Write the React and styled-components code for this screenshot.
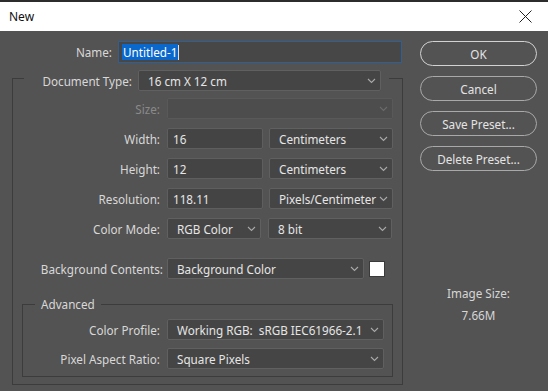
import React from "react";
import styled, { createGlobalStyle } from "styled-components";

const Global = createGlobalStyle`
  html, body { margin: 0; padding: 0; background: #535353; }
  body { width: 548px; height: 391px; overflow: hidden; font-family: "Noto Sans", "Open Sans", sans-serif; }
  * { box-sizing: border-box; }
`;

const Window = styled.div`
  width: 548px;
  height: 391px;
  display: flex;
  flex-direction: column;
  background: #535353;
  font-size: 11.7px;
  color: #dcdcdc;
`;

const TitleBar = styled.div`
  height: 31px;
  flex: none;
  border-top: 2px solid #2c2c2c;
  background: #ffffff;
  display: flex;
  align-items: center;
  justify-content: space-between;
  padding: 0 16px 0 9px;
  color: #111;
  font-size: 12px;
`;

const Body = styled.div`
  display: flex;
  padding: 10px 11px 0 12px;
  gap: 17px;
`;

const Main = styled.div`
  width: 391px;
  display: flex;
  flex-direction: column;
`;

const Row = styled.div`
  display: flex;
  align-items: center;
  gap: ${(p) => p.$gap ?? 7}px;
  margin-top: ${(p) => p.$mt ?? 0}px;
  margin-left: ${(p) => p.$ml ?? 0}px;
`;

const Label = styled.span`
  width: ${(p) => p.$w}px;
  flex: none;
  text-align: right;
  white-space: nowrap;
  line-height: ${(p) => p.$lh ?? 16}px;
  color: ${(p) => (p.$disabled ? "#8a8a8a" : "#d8d8d8")};
`;

const NameInput = styled.div`
  width: 284px;
  height: 22px;
  border: 1px solid #2f5f93;
  background: #474747;
  display: flex;
  align-items: center;
  padding-left: 3px;
`;

const Selected = styled.span`
  background: #0a68cc;
  color: #fff;
  padding: 0 1px;
  line-height: 16px;
`;

const Caret = styled.span`
  width: 1px;
  height: 15px;
  background: #e0e0e0;
`;

const Field = styled.div`
  width: ${(p) => p.$w}px;
  height: 21px;
  flex: none;
  background: #444444;
  border: 1px solid #5e5e5e;
  border-radius: 2px;
  display: flex;
  align-items: center;
  padding-left: 5px;
  color: #e6e6e6;
  white-space: pre;
`;

const SelectBox = styled.div`
  width: ${(p) => p.$w}px;
  height: 21px;
  flex: none;
  background: ${(p) => (p.$disabled ? "#4d4d4d" : "#454545")};
  border: 1px solid ${(p) => (p.$disabled ? "#595959" : "#606060")};
  border-radius: 2px;
  display: flex;
  align-items: center;
  justify-content: space-between;
  gap: 2px;
  padding: 0 4px 0 9px;
  color: #e6e6e6;
  white-space: pre;
  overflow: hidden;
`;

const Chevron = ({ dim }) => (
  <svg width="9" height="6" viewBox="0 0 9 6" style={{ flex: "none" }}>
    <path d="M1 1 L4.5 4.5 L8 1" fill="none" stroke={dim ? "#6a6a6a" : "#a8a8a8"} strokeWidth="1.1" />
  </svg>
);

const Select = ({ w, children, disabled }) => (
  <SelectBox $w={w} $disabled={disabled}>
    <span>{children}</span>
    <Chevron dim={disabled} />
  </SelectBox>
);

const Group = styled.fieldset`
  margin: 7px 0 0 0;
  padding: 12px 9px 7px 0;
  border: 1px solid #3c3c3c;
  display: flex;
  flex-direction: column;
  gap: 9px;
  min-width: 0;
`;

const TopLegend = styled.legend`
  margin-left: 11px;
  padding: 0 8px 0 16px;
  height: 16px;
  display: flex;
  align-items: flex-start;
  gap: 6px;
`;

const SubGroup = styled.fieldset`
  margin: 8px 0 0 9px;
  padding: 7px 9px 7px 0;
  border: 1px solid #3c3c3c;
  display: flex;
  flex-direction: column;
  gap: 8px;
  min-width: 0;
`;

const SubLegend = styled.legend`
  margin-left: 12px;
  padding: 0 6px;
  line-height: 16px;
  height: 16px;
  color: #d8d8d8;
`;

const Swatch = styled.div`
  width: 16px;
  height: 16px;
  background: #ffffff;
  border: 1px solid #3a3a3a;
  margin-left: -2px;
`;

const Side = styled.div`
  width: 117px;
  display: flex;
  flex-direction: column;
  gap: 10px;
`;

const Button = styled.div`
  height: 25px;
  border-radius: 13px;
  border: ${(p) => (p.$primary ? "1.5px solid #d2d2d2" : "1px solid #a9a9a9")};
  display: flex;
  align-items: center;
  justify-content: center;
  color: #e4e4e4;
`;

const ImageSize = styled.div`
  margin-top: 104px;
  display: flex;
  flex-direction: column;
  align-items: center;
  gap: 6px;
  color: #d6d6d6;
  line-height: 16px;
`;

const CloseIcon = () => (
  <svg width="13" height="13" viewBox="0 0 13 13">
    <path d="M0.5 0.5 L12.5 12.5 M12.5 0.5 L0.5 12.5" stroke="#222" strokeWidth="1" />
  </svg>
);

export default function App() {
  return (
    <>
      <Global />
      <Window>
        <TitleBar>
          <span>New</span>
          <CloseIcon />
        </TitleBar>
        <Body>
          <Main>
            <Row $gap={6}>
              <Label $w={100}>Name:</Label>
              <NameInput>
                <Selected>Untitled-1</Selected>
                <Caret />
              </NameInput>
            </Row>
            <Group>
              <TopLegend>
                <Label $w={92} $lh={22}>Document Type:</Label>
                <Select w={243}>16 cm X 12 cm</Select>
              </TopLegend>
              <Row>
                <Label $w={147} $disabled>Size:</Label>
                <Select w={226} disabled>{" "}</Select>
              </Row>
              <Row>
                <Label $w={147}>Width:</Label>
                <Field $w={96}>16</Field>
                <Row $gap={0} $ml={-1}>
                  <Select w={124}>Centimeters</Select>
                </Row>
              </Row>
              <Row>
                <Label $w={147}>Height:</Label>
                <Field $w={96}>12</Field>
                <Row $gap={0} $ml={-1}>
                  <Select w={124}>Centimeters</Select>
                </Row>
              </Row>
              <Row>
                <Label $w={147}>Resolution:</Label>
                <Field $w={96}>118.11</Field>
                <Row $gap={0} $ml={-1}>
                  <Select w={124}>Pixels/Centimeter</Select>
                </Row>
              </Row>
              <Row>
                <Label $w={147}>Color Mode:</Label>
                <Select w={94}>RGB Color</Select>
                <Select w={124}>8 bit</Select>
              </Row>
              <Row $mt={10}>
                <Label $w={150}>Background Contents:</Label>
                <Row $gap={7} $ml={-3}>
                  <Select w={197}>Background Color</Select>
                  <Swatch />
                </Row>
              </Row>
              <SubGroup>
                <SubLegend>Advanced</SubLegend>
                <Row>
                  <Label $w={137}>Color Profile:</Label>
                  <Select w={217}>{"Working RGB:  sRGB IEC61966-2.1"}</Select>
                </Row>
                <Row>
                  <Label $w={137}>Pixel Aspect Ratio:</Label>
                  <Select w={217}>Square Pixels</Select>
                </Row>
              </SubGroup>
            </Group>
          </Main>
          <Side>
            <Button $primary>OK</Button>
            <Button>Cancel</Button>
            <Button>Save Preset...</Button>
            <Button>Delete Preset...</Button>
            <ImageSize>
              <span>Image Size:</span>
              <span>7.66M</span>
            </ImageSize>
          </Side>
        </Body>
      </Window>
    </>
  );
}
